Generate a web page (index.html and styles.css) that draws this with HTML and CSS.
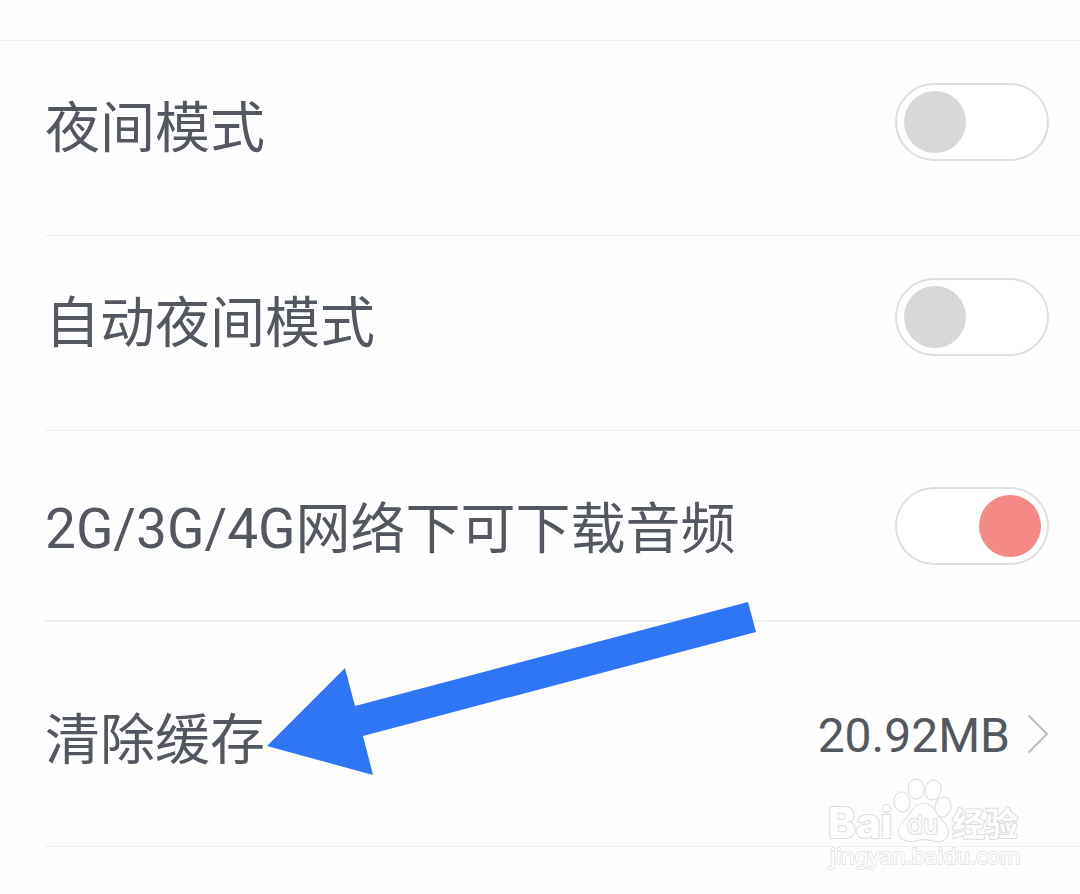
FILE: index.html
```html
<!DOCTYPE html>
<html lang="zh-CN">
<head>
<meta charset="utf-8">
<meta name="viewport" content="width=device-width, initial-scale=1">
<title>设置</title>
<link rel="stylesheet" href="styles.css">
</head>
<body>
<main class="settings">
  <div class="row">
    <label class="label" for="night">夜间模式</label>
    <input class="switch" type="checkbox" role="switch" id="night">
  </div>
  <div class="row">
    <label class="label" for="auto-night">自动夜间模式</label>
    <input class="switch" type="checkbox" role="switch" id="auto-night">
  </div>
  <div class="row row-download">
    <label class="label" for="download">2G/3G/4G网络下可下载音频</label>
    <input class="switch" type="checkbox" role="switch" id="download" checked>
  </div>
  <div class="row row-cache">
    <button class="cache" type="button">
      <span class="label">清除缓存</span>
      <span class="value">20.92MB</span>
      <svg class="chevron" viewBox="0 0 22 40" aria-hidden="true"><path d="M1.500 1.500 20 20 1.500 38.500"/></svg>
    </button>
    <svg class="arrow" viewBox="0 0 490 174" aria-hidden="true">
      <path d="M0 144 78 66 88 104 481 0 489 30 96 134 106 173Z"/>
    </svg>
  </div>
</main>
<svg class="watermark" viewBox="0 0 200 100" role="img" aria-label="Baidu 经验">
  <g class="mark">
    <text class="brand" x="0" y="63">Bai</text>
    <ellipse cx="74" cy="27" rx="7.500" ry="9.500" transform="rotate(-8 74 27)"/>
    <ellipse cx="88" cy="14" rx="7.500" ry="9.500"/>
    <ellipse cx="105" cy="15" rx="7.500" ry="9.500" transform="rotate(12 105 15)"/>
    <ellipse cx="115" cy="32" rx="7.500" ry="9.500" transform="rotate(15 115 32)"/>
    <path d="M95 29C104 29 106 35 110 41C115 48 120 50 120 57C120 64 114 67 108 66C102 65 99 64 95 64C91 64 88 66 82 66C75 66 71 62 71 56C71 49 77 46 81 41C85 35 87 29 95 29Z"/>
    <text class="du" x="79" y="59">du</text>
    <text class="jingyan" x="124" y="61">经验</text>
  </g>
  <text class="url" x="2" y="89">jingyan.baidu.com</text>
</svg>
</body>
</html>
```
FILE: styles.css
```css
* { box-sizing: border-box; }

body {
  position: relative;
  min-height: 100vh;
  margin: 0;
  background: #fefefe;
  color: #535860;
  font-family: Roboto, "Noto Sans CJK SC", sans-serif;
}

.settings {
  padding-top: 40px;
}

.settings::before {
  content: "";
  display: block;
  border-top: 1px solid #efefef;
}

.row {
  position: relative;
  display: flex;
  align-items: flex-start;
  justify-content: space-between;
  margin-left: 45px;
  padding: 42px 31px 74px 0;
  border-bottom: 1px solid #f0f0f0;
}

.row-download {
  padding-top: 56px;
  padding-bottom: 55px;
  border-bottom-width: 2px;
}

.row-cache {
  padding-top: 76px;
  padding-bottom: 70px;
}

.label {
  height: 78px;
  padding-top: 8px;
  font-size: 55px;
  line-height: 74px;
  white-space: nowrap;
}

.row-download .label,
.row-cache .label {
  padding-top: 5px;
}

.switch {
  appearance: none;
  display: flex;
  align-items: center;
  flex: none;
  width: 154px;
  height: 78px;
  margin: 0;
  padding: 0 6px 0 7px;
  border: 2px solid #dfdfdf;
  border-radius: 39px;
  background: #fff;
}

.switch::before {
  content: "";
  width: 62px;
  height: 62px;
  border-radius: 50%;
  background: #d8d8d8;
}

.switch:checked {
  justify-content: flex-end;
}

.switch:checked::before {
  background: #f58986;
}

.cache {
  display: flex;
  align-items: flex-start;
  width: 100%;
  padding: 0;
  border: 0;
  background: none;
  color: inherit;
  font: inherit;
  text-align: left;
}

.value {
  margin-left: auto;
  font-size: 48px;
  line-height: 76px;
}

.chevron {
  width: 22px;
  height: 40px;
  margin: 16px 0 0 17px;
  fill: none;
  stroke: #b9bdc5;
  stroke-width: 2;
}

.arrow {
  position: absolute;
  top: -20px;
  left: 222px;
  width: 490px;
  height: 174px;
  fill: #2f76f6;
}

.watermark {
  position: absolute;
  right: 52px;
  top: 775px;
  width: 200px;
  height: 100px;
}

.mark,
.url {
  fill: #fff;
  stroke: #dcdcdc;
  stroke-width: 2;
  stroke-linejoin: round;
  paint-order: stroke;
}

.brand {
  font: 800 42px Inter, sans-serif;
}

.du {
  font: 400 26px Inter, sans-serif;
}

.jingyan {
  font: 700 33px "Noto Sans CJK SC", sans-serif;
}

.url {
  stroke: #e6e6e6;
  font: 400 22px "Noto Sans", sans-serif;
}
```
